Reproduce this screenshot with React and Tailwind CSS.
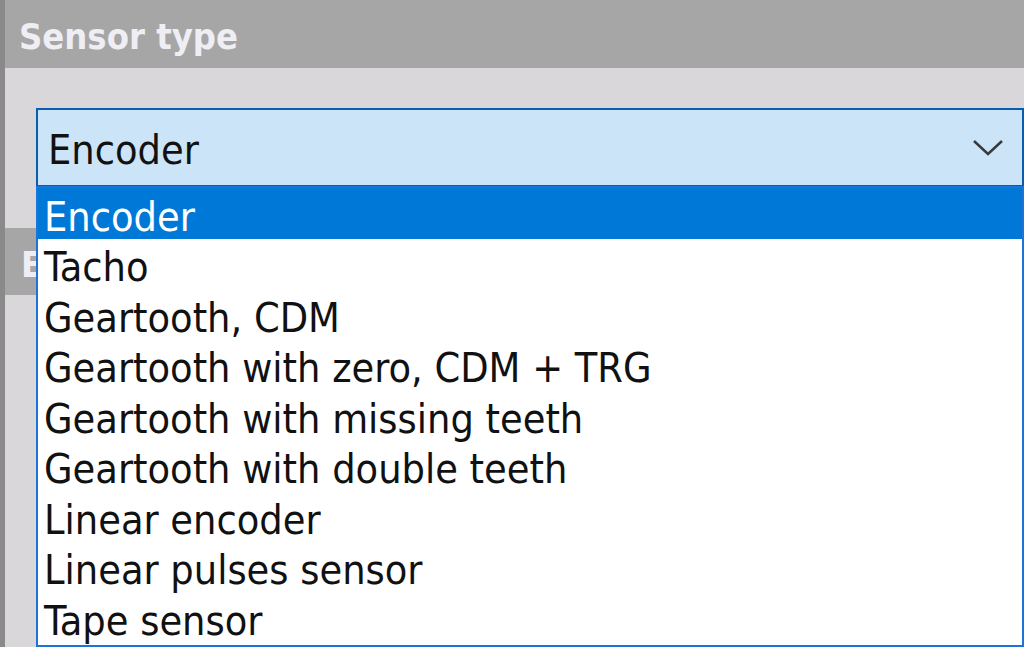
import React from "react";

const items = [
  "Encoder",
  "Tacho",
  "Geartooth, CDM",
  "Geartooth with zero, CDM + TRG",
  "Geartooth with missing teeth",
  "Geartooth with double teeth",
  "Linear encoder",
  "Linear pulses sensor",
  "Tape sensor",
];

const font = { fontFamily: '"DejaVu Sans Condensed", "DejaVu Sans", Tahoma, sans-serif' };

export default function App() {
  return (
    <div className="relative w-[1024px] h-[647px] overflow-hidden flex bg-[#d9d7d9]" style={font}>
      {/* left edge */}
      <div className="w-[5px] shrink-0 bg-[#8a8a8a]" />

      <div className="flex-1 flex flex-col">
        {/* Sensor type header */}
        <div className="h-[68px] bg-[#a6a6a6] flex items-center pl-[14px] pt-[6px]">
          <span className="text-[36px] font-bold text-[#eeeef4] leading-none">Sensor type</span>
        </div>

        {/* combo area */}
        <div className="h-[160px] pt-[40px] pl-[31px]">
          <div className="h-[79px] border-2 border-[#0a5cb0] bg-[#cce4f7] flex items-center justify-between pl-[10px] pr-[18px] pt-[5px]">
            <span className="text-[41px] text-[#111] leading-none">Encoder</span>
            <svg width="32" height="20" viewBox="0 0 32 20" fill="none" className="-mt-[4px]">
              <path d="M2 3 L16 16 L30 3" stroke="#3a3a3a" strokeWidth="2.5" />
            </svg>
          </div>
        </div>

        {/* next header, mostly hidden by the list */}
        <div className="h-[67px] bg-[#a6a6a6] flex items-center pl-[16px] pt-[6px]">
          <span className="text-[36px] font-bold text-[#eeeef4] leading-none">E</span>
        </div>
        <div className="flex-1" />
      </div>

      {/* open dropdown list */}
      <div className="absolute left-[36px] top-[186px] w-[988px] h-[461px] border-2 border-[#1c74d8] bg-white">
        {items.map((t, i) => (
          <div
            key={t}
            className={
              "h-[50.5px] flex items-center pl-[6px] pt-[8px] text-[41px] leading-none " +
              (i === 0 ? "bg-[#0078d7] text-white" : "text-[#111]")
            }
          >
            {t}
          </div>
        ))}
      </div>
    </div>
  );
}
